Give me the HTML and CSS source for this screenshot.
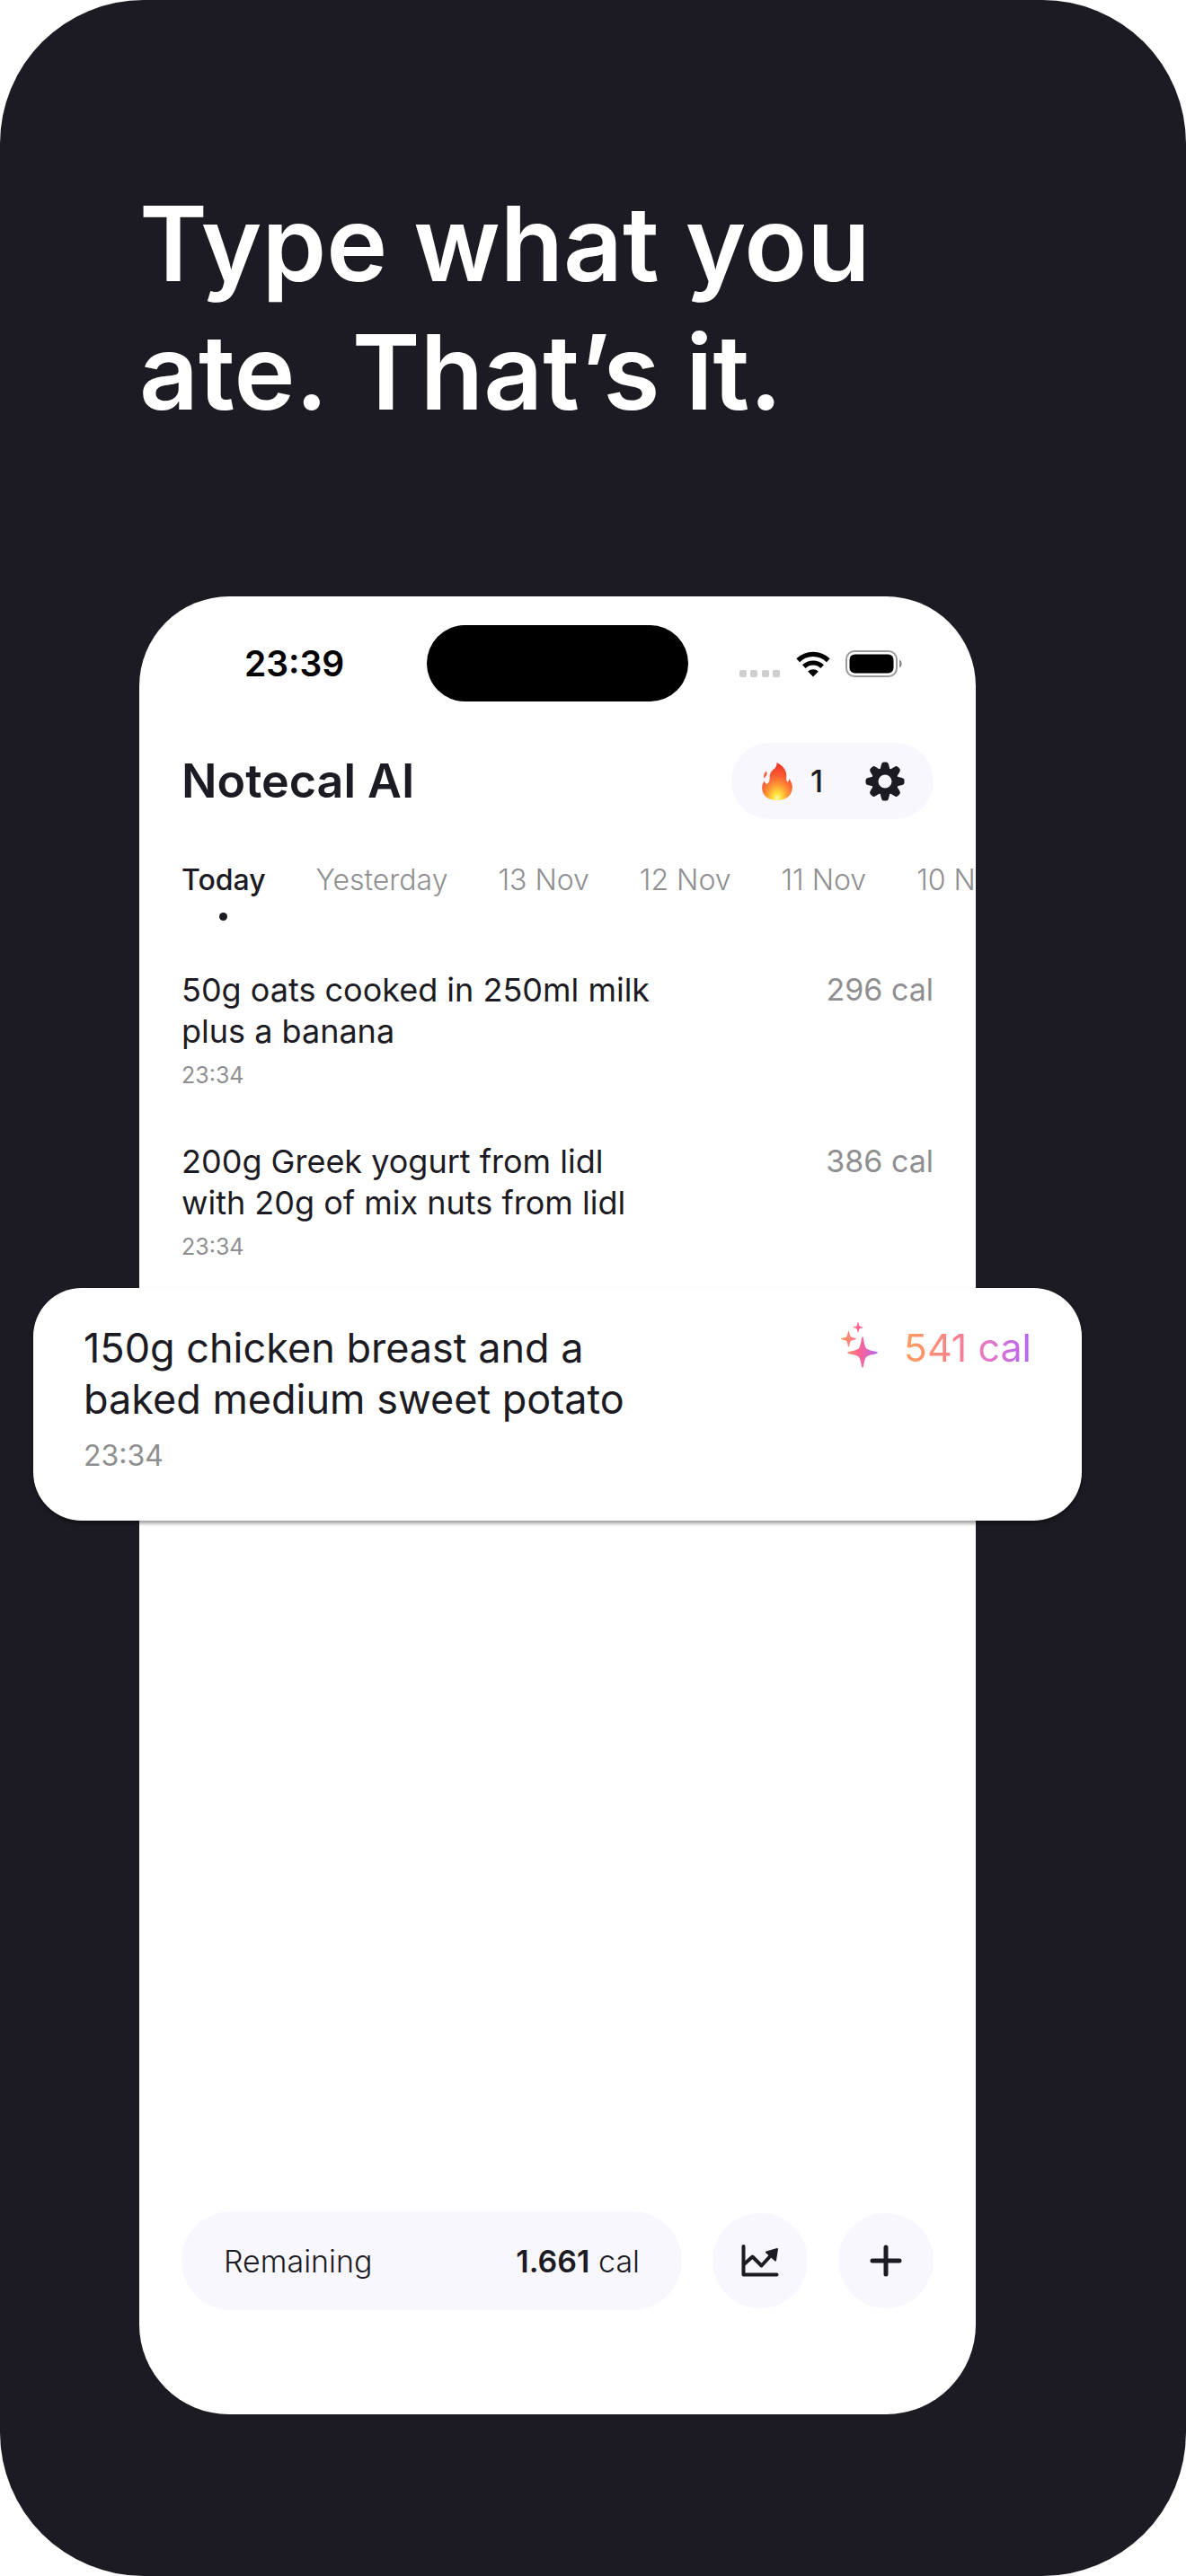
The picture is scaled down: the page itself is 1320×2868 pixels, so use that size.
FILE: index.html
```html
<!DOCTYPE html>
<html lang="en">
<head>
  <meta charset="UTF-8">
  <meta name="viewport" content="width=device-width, initial-scale=1">
  <title>Notecal AI</title>
  <link rel="stylesheet" href="styles.css">
</head>
<body>

<main class="page">
  <h1 class="headline">Type what you<br>ate. That’s it.</h1>

  <section class="phone">
    <div class="status-bar">
      <span class="clock">23:39</span>
      <span class="island"></span>
      <span class="status-icons">
        <svg class="signal" viewBox="0 0 46 8" aria-hidden="true">
          <rect x="0" y="0" width="8" height="8" rx="2"/>
          <rect x="12" y="0" width="8" height="8" rx="2"/>
          <rect x="25" y="0" width="8" height="8" rx="2"/>
          <rect x="37" y="0" width="8" height="8" rx="2"/>
        </svg>
        <svg class="wifi" viewBox="0 0 38 29" aria-hidden="true">
          <path d="M2.200 10.200A24 24 0 0 1 35.800 10.200" fill="none" stroke="#000" stroke-width="5.400"/>
          <path d="M8.800 17.200A14.500 14.500 0 0 1 29.200 17.200" fill="none" stroke="#000" stroke-width="5.200"/>
          <path d="M13.200 22.600A8.500 8.500 0 0 1 24.800 22.600L19 28.500Z"/>
        </svg>
        <svg class="battery" viewBox="0 0 63 30" aria-hidden="true">
          <rect x="1" y="1" width="56" height="28" rx="9" fill="none" stroke="#9b9b9b" stroke-width="2"/>
          <rect x="4.500" y="4.500" width="49" height="21" rx="6"/>
          <path d="M60 10.500C63.500 12 63.500 18 60 19.500Z" fill="#8b8b8b"/>
        </svg>
      </span>
    </div>

    <header class="app-header">
      <h2>Notecal AI</h2>
      <div class="header-actions">
        <span class="streak">
          <svg class="flame" viewBox="0 0 34 42" aria-hidden="true">
            <defs>
              <radialGradient id="fire" cx="50%" cy="94%" r="85%">
                <stop offset="0" stop-color="#fffbb0"/>
                <stop offset="0.150" stop-color="#ffe23d"/>
                <stop offset="0.400" stop-color="#ff9c33"/>
                <stop offset="0.650" stop-color="#fb6535"/>
                <stop offset="1" stop-color="#f03a28"/>
              </radialGradient>
            </defs>
            <path fill="url(#fire)" d="M16.500 0C23 3 27.500 8.500 27.300 15C27.200 18 26.800 20 28.500 21.500C29.800 21 30.200 19.500 30 18C33 21 34.200 25.500 33.700 29C33 37 26.500 42 17 42C7.500 42 .5 37 .2 29C0 25.500 1 22.500 2.800 20.500C3 22 3.800 23.300 5.200 23.800C8 23 8.700 20 8.700 16.500C8.600 11.500 11 9 14 6.800C16 5 16.800 2.500 16.500 0Z"/>
            <path fill="#f7593a" d="M5 9.500C6.200 12.500 5.500 14.500 2.300 17.500C1.800 14 2.600 11.300 5 9.500Z"/>
          </svg>
          1
        </span>
        <button class="settings" type="button" aria-label="Settings">
          <svg viewBox="0 0 44 44" aria-hidden="true">
            <g fill="#1c1b23">
              <path d="M22 7a15 15 0 1 0 0 30a15 15 0 1 0 0-30ZM22 14.500a7.500 7.500 0 1 1 0 15a7.500 7.500 0 1 1 0-15Z" fill-rule="evenodd"/>
              <path id="tooth" d="M16.500 9L18 3Q18.500 .5 20.500 .5H23.500Q25.500 .5 26 3L27.500 9Z"/>
              <use href="#tooth" transform="rotate(45 22 22)"/>
              <use href="#tooth" transform="rotate(90 22 22)"/>
              <use href="#tooth" transform="rotate(135 22 22)"/>
              <use href="#tooth" transform="rotate(180 22 22)"/>
              <use href="#tooth" transform="rotate(225 22 22)"/>
              <use href="#tooth" transform="rotate(270 22 22)"/>
              <use href="#tooth" transform="rotate(315 22 22)"/>
            </g>
          </svg>
        </button>
      </div>
    </header>

    <nav class="days">
      <button type="button" class="active">Today</button>
      <button type="button">Yesterday</button>
      <button type="button">13 Nov</button>
      <button type="button">12 Nov</button>
      <button type="button">11 Nov</button>
      <button type="button">10 Nov</button>
    </nav>

    <div class="entries">
      <article class="entry">
        <div>
          <p>50g oats cooked in 250ml milk<br>plus a banana</p>
          <time>23:34</time>
        </div>
        <span class="calories">296 cal</span>
      </article>

      <article class="entry">
        <div>
          <p>200g Greek yogurt from lidl<br>with 20g of mix nuts from lidl</p>
          <time>23:34</time>
        </div>
        <span class="calories">386 cal</span>
      </article>

      <article class="entry featured">
        <div>
          <p>150g chicken breast and a<br>baked medium sweet potato</p>
          <time>23:34</time>
        </div>
        <span class="calories">
          <svg class="sparkles" viewBox="0 0 42 52" aria-hidden="true">
            <defs>
              <linearGradient id="spark" x1="0" y1="0" x2="42" y2="0" gradientUnits="userSpaceOnUse">
                <stop offset="0" stop-color="#ff9d5c"/>
                <stop offset="0.500" stop-color="#fb6593"/>
                <stop offset="1" stop-color="#b264f5"/>
              </linearGradient>
            </defs>
            <g fill="url(#spark)">
              <path d="M24 16C25.300 16 25.600 27 28.500 29.500C31 32 41 32.500 41 34C41 35.500 31 36 28.500 38.500C25.600 41 25.300 51 24 51C22.700 51 22.400 41 19.500 38.500C17 36 7 35.500 7 34C7 32.500 17 32 19.500 29.500C22.400 27 22.700 16 24 16Z"/>
              <path d="M8.500 10C9.500 10 9.500 15 11 16.300C12.300 17.700 17 17.700 17 18.700C17 19.700 12.300 19.700 11 21C9.500 22.400 9.500 27.500 8.500 27.500C7.500 27.500 7.500 22.400 6 21C4.700 19.700 0 19.700 0 18.700C0 17.700 4.700 17.700 6 16.300C7.500 15 7.500 10 8.500 10Z"/>
              <path d="M19 0C19.700 0 19.800 3.400 20.600 4.200C21.400 5 24.500 5 24.500 5.800C24.500 6.600 21.400 6.600 20.600 7.400C19.800 8.200 19.700 11.500 19 11.500C18.300 11.500 18.200 8.200 17.400 7.400C16.600 6.600 13.500 6.600 13.500 5.800C13.500 5 16.600 5 17.400 4.200C18.200 3.400 18.300 0 19 0Z"/>
            </g>
          </svg>
          <span class="gradient-text">541 cal</span>
        </span>
      </article>
    </div>

    <footer class="bottom-bar">
      <div class="remaining">
        <span>Remaining</span>
        <span><strong>1.661</strong> cal</span>
      </div>
      <button class="round-btn" type="button" aria-label="Statistics">
        <svg viewBox="0 0 42 36" aria-hidden="true">
          <path d="M2.500 2V33.500H39.500" fill="none" stroke="#1c1b23" stroke-width="4" stroke-linecap="round" stroke-linejoin="round"/>
          <path d="M3 22L12.500 13.500L22.500 23.500L34 11" fill="none" stroke="#1c1b23" stroke-width="4" stroke-linejoin="round"/>
          <path d="M28 8.500L40 5L38 17.500Z" fill="#1c1b23" stroke="#1c1b23" stroke-width="2" stroke-linejoin="round"/>
        </svg>
      </button>
      <button class="round-btn" type="button" aria-label="Add entry">
        <svg viewBox="0 0 42 36" aria-hidden="true">
          <path d="M21 3V33M6 18H36" fill="none" stroke="#1c1b23" stroke-width="5" stroke-linecap="round"/>
        </svg>
      </button>
    </footer>
  </section>
</main>

</body>
</html>
```
FILE: styles.css
```css
* {
  box-sizing: border-box;
}
body {
  margin: 0;
  background-color: #fff;
  color: #1c1b23;
  font-family: Inter, 'Liberation Sans', sans-serif;
}
h1, h2, p {
  margin: 0;
}
button {
  background: none;
  border: none;
  padding: 0;
  color: inherit;
  font: inherit;
  cursor: pointer;
}
svg {
  display: block;
}
.page {
  background-color: #1c1b23;
  border-radius: 160px;
  min-height: 100vh;
  padding: 200px 234px 180px 155px;
  display: flex;
  flex-direction: column;
}
.headline {
  color: #fff;
  font-size: 115px;
  font-weight: 600;
  line-height: 143px;
  margin-bottom: 178px;
  white-space: nowrap;
}
.phone {
  background-color: #fff;
  border-radius: 100px;
  flex: 1;
  padding: 32px 47px 116px;
  display: flex;
  flex-direction: column;
}

/* status bar */
.status-bar {
  display: grid;
  grid-template-columns: 1fr 291px 1fr;
  align-items: center;
}
.clock {
  color: #000;
  font-size: 39px;
  font-weight: 600;
  padding-left: 70px;
}
.island {
  background-color: #000;
  border-radius: 43px;
  height: 85px;
}
.status-icons {
  display: flex;
  align-items: flex-end;
  justify-content: flex-end;
  gap: 17px;
  padding-right: 35px;
}
.signal {
  width: 46px;
  height: 8px;
  fill: #cfcfcf;
}
.wifi {
  width: 38px;
  height: 29px;
}
.battery {
  width: 63px;
  height: 30px;
}

/* app header */
.app-header {
  display: flex;
  align-items: center;
  justify-content: space-between;
  margin-top: 46px;
}
.app-header h2 {
  font-size: 52px;
  font-weight: 600;
}
.header-actions {
  background-color: #f8f7fd;
  border-radius: 43px;
  height: 85px;
  padding: 0 32px 0 34px;
  display: flex;
  align-items: center;
  gap: 47px;
}
.streak {
  display: flex;
  align-items: center;
  gap: 20px;
  font-size: 34px;
  font-weight: 500;
}
.flame {
  width: 34px;
  height: 42px;
}
.settings svg {
  width: 44px;
  height: 44px;
}

/* day tabs */
.days {
  display: flex;
  gap: 56px;
  margin: 48px -47px 0 0;
  overflow: hidden;
}
.days button {
  display: flex;
  flex-direction: column;
  align-items: center;
  gap: 16px;
  color: #8f8f91;
  font-size: 32px;
  font-weight: 300;
  line-height: 40px;
  white-space: nowrap;
}
.days button::after {
  content: "";
  width: 9px;
  height: 9px;
  border-radius: 50%;
}
.days .active {
  color: #1c1b23;
  font-weight: 500;
}
.days .active::after {
  background-color: #1c1b23;
}

/* food log */
.entries {
  flex: 1;
  margin-top: 54px;
}
.entry {
  display: flex;
  justify-content: space-between;
  margin-bottom: 55px;
  font-size: 36px;
  line-height: 46px;
}
.entry time {
  display: block;
  margin-top: 8px;
  color: #8f8f91;
  font-size: 25px;
  line-height: 36px;
}
.calories {
  display: flex;
  color: #8f8f91;
  font-size: 34px;
  white-space: nowrap;
}
.featured {
  background-color: #fff;
  border-radius: 54px;
  box-shadow: 0 3px 4px rgba(0, 0, 0, 0.4);
  margin: -27px -165px 0;
  padding: 38px 56px 49px;
  font-size: 45px;
  line-height: 57px;
}
.featured time {
  margin-top: 12px;
  font-size: 32px;
  line-height: 46px;
}
.featured .calories {
  gap: 28px;
  font-size: 43px;
}
.sparkles {
  width: 42px;
  height: 52px;
}
.gradient-text {
  align-self: flex-start;
  background: linear-gradient(90deg, #ff9d5c, #fb7c94 45%, #e678c4 65%, #b264f5);
  -webkit-background-clip: text;
  background-clip: text;
  color: transparent;
}

/* bottom bar */
.bottom-bar {
  display: flex;
  align-items: center;
  gap: 34px;
}
.remaining {
  background-color: #f8f7fd;
  border-radius: 55px;
  flex: 1;
  height: 110px;
  padding: 0 47px;
  display: flex;
  align-items: center;
  justify-content: space-between;
  font-size: 34px;
  font-weight: 300;
}
.remaining strong {
  font-weight: 600;
}
.round-btn {
  background-color: #f8f7fd;
  border-radius: 50%;
  width: 106px;
  height: 106px;
  display: flex;
  align-items: center;
  justify-content: center;
}
.round-btn svg {
  width: 42px;
  height: 36px;
}
```
